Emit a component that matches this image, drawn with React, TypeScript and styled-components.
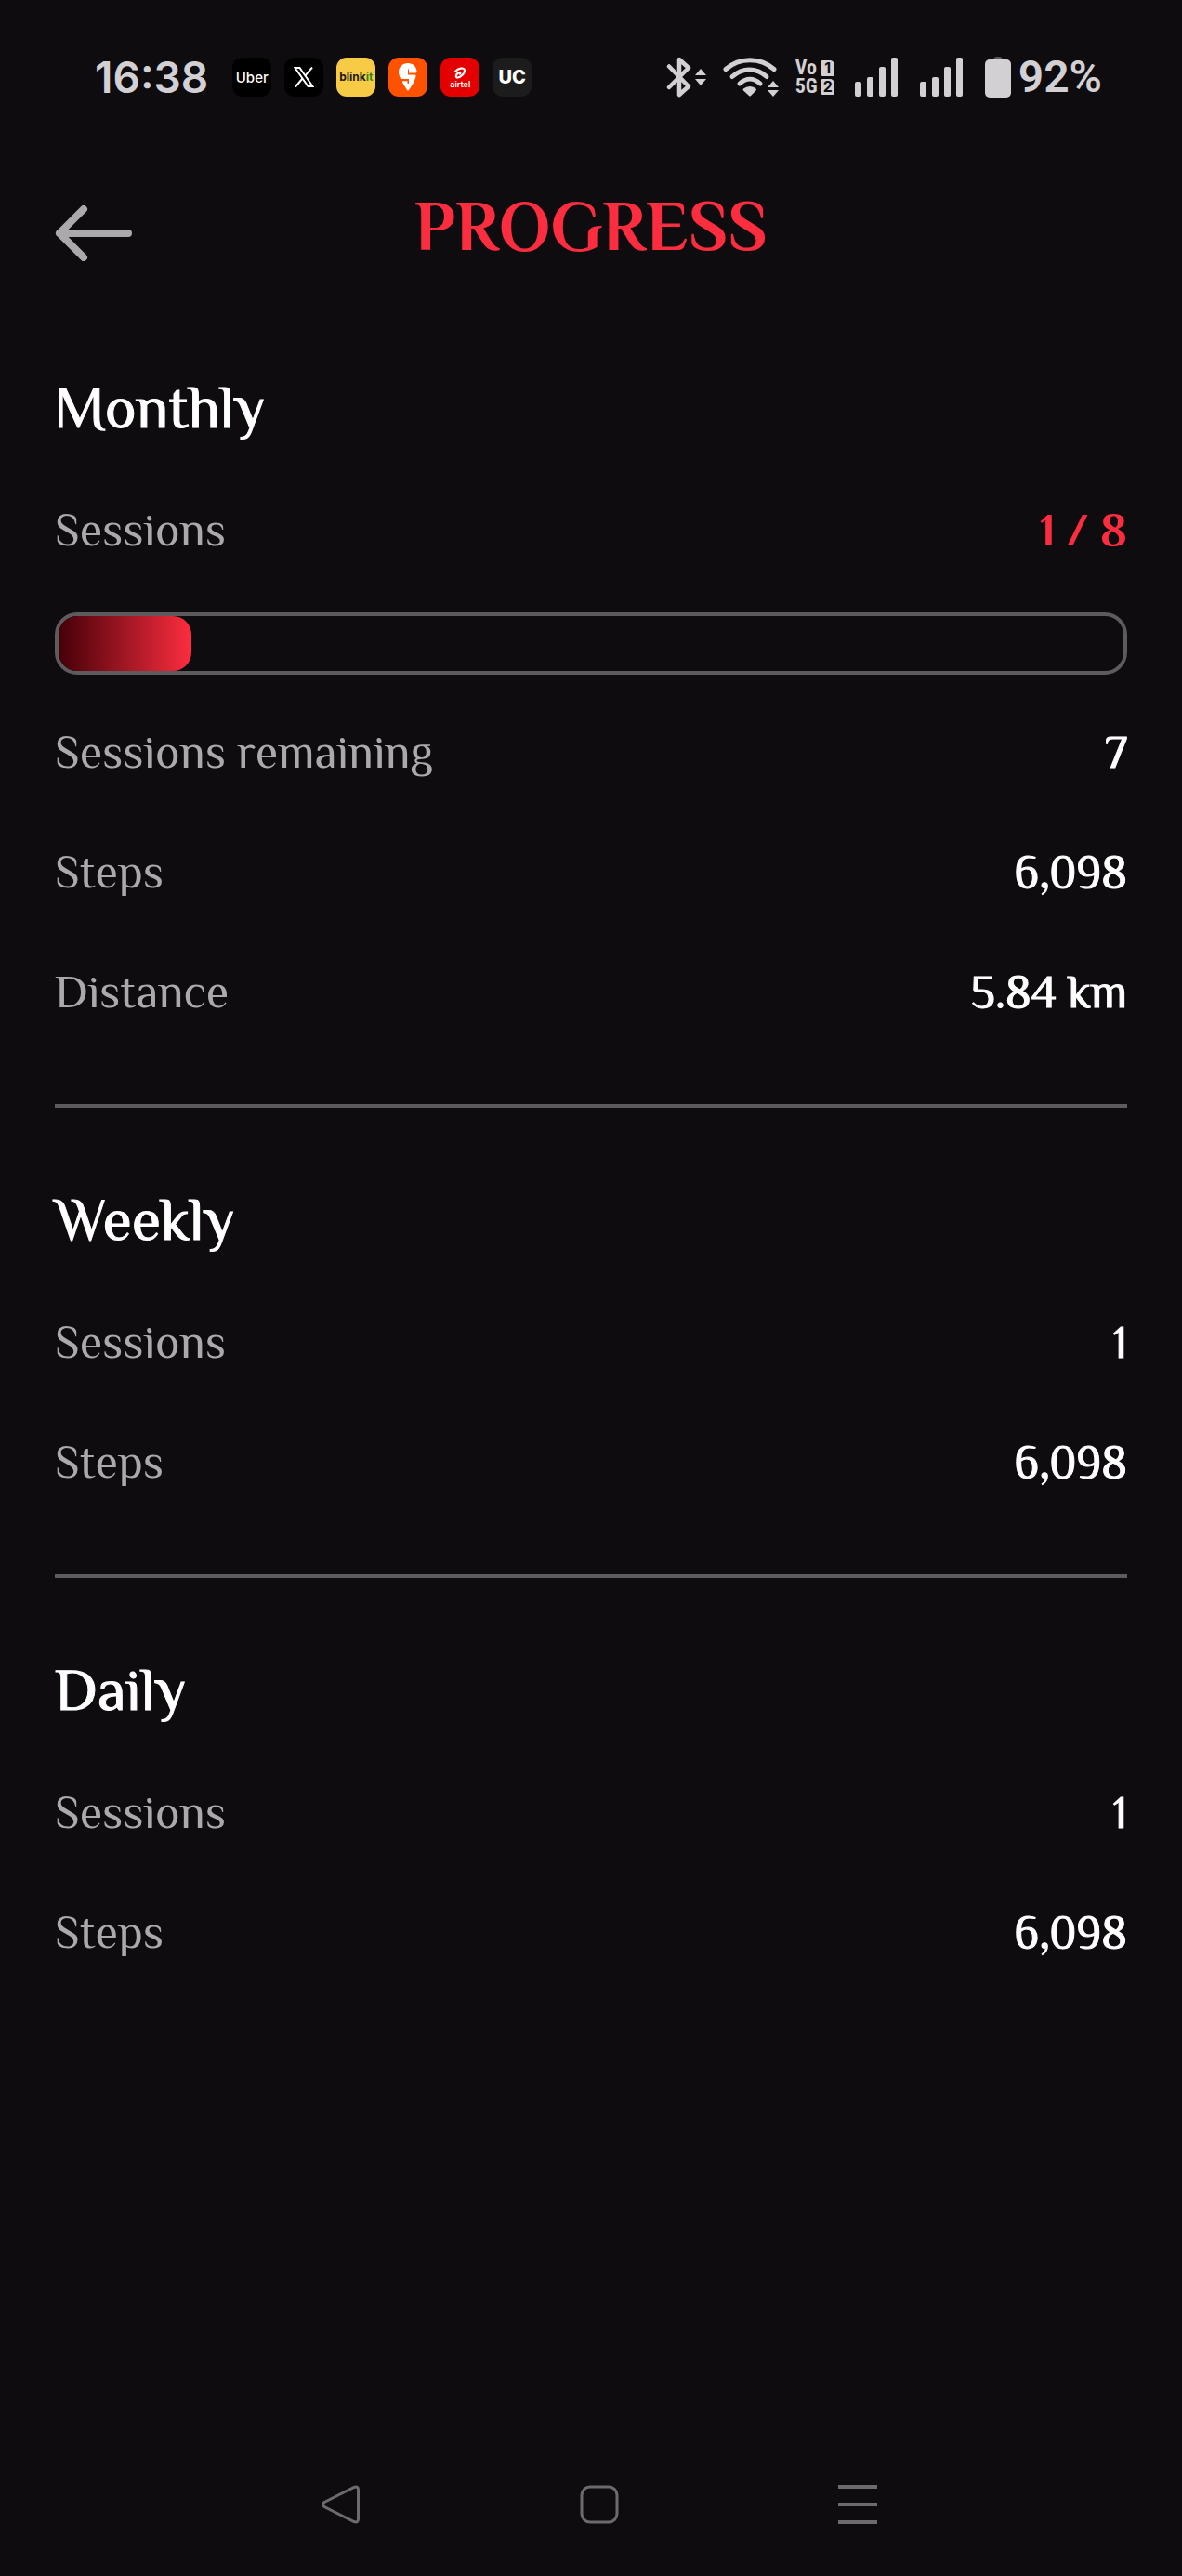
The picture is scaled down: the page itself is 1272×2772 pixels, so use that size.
import React from "react";
import styled, { createGlobalStyle } from "styled-components";

const color = {
  background: "#0f0c10",
  accent: "#fc2d3f",
  text: "#ffffff",
  label: "#aba9ab",
  line: "#5d5b5e",
  status: "#d2d0d3",
  nav: "#6c6a6d",
};

const GlobalStyle = createGlobalStyle`
  body {
    margin: 0;
    background: ${color.background};
  }
  *, *::before, *::after {
    box-sizing: border-box;
  }
`;

const Screen = styled.div`
  display: flex;
  flex-direction: column;
  min-height: 100vh;
  background: ${color.background};
  color: ${color.text};
  font-family: Philosopher, "Liberation Serif", serif;
`;

const StatusBar = styled.div`
  display: flex;
  align-items: center;
  justify-content: space-between;
  height: 166px;
  padding: 0 86px 0 102px;
  color: ${color.status};
  font-family: Inter, sans-serif;
`;

const StatusGroup = styled.div<{ $gap: number }>`
  display: flex;
  align-items: center;
  gap: ${(p) => p.$gap}px;
`;

const StatusText = styled.span<{ $narrow?: boolean }>`
  font-family: ${(p) => (p.$narrow ? "Roboto" : "Inter")}, sans-serif;
  font-size: ${(p) => (p.$narrow ? 48 : 46)}px;
  font-weight: 600;
  line-height: 56px;
`;

const AppTiles = styled.div`
  display: flex;
  gap: 14px;
`;

const AppTile = styled.div<{ $fill: string; $size?: number; $weight?: number; $ink?: string }>`
  display: flex;
  flex-direction: column;
  align-items: center;
  justify-content: center;
  width: 42px;
  height: 42px;
  border-radius: 11px;
  background: ${(p) => p.$fill};
  color: ${(p) => p.$ink ?? "#ffffff"};
  font-size: ${(p) => p.$size ?? 12}px;
  font-weight: ${(p) => p.$weight ?? 500};
  line-height: 1;
`;

const TileWord = styled.span`
  display: flex;
`;

const GreenPart = styled.span`
  color: #2c8a1c;
`;

const Svg = styled.svg`
  display: block;
  flex: none;
`;

const NetworkBadge = styled.div`
  display: grid;
  grid-template-columns: 24px 14px;
  column-gap: 4px;
  row-gap: 2px;
  align-items: center;
  font-family: "Roboto Condensed", "Liberation Sans Narrow", "Liberation Sans", sans-serif;
  font-size: 22px;
  font-weight: 700;
  line-height: 18px;
`;

const SimCard = styled.span`
  display: block;
  height: 17px;
  border-radius: 1px 5px 1px 1px;
  background: ${color.status};
  color: ${color.background};
  font-family: Inter, sans-serif;
  font-size: 16px;
  line-height: 17px;
  text-align: center;
`;

const Header = styled.header`
  display: grid;
  grid-template-columns: 84px 1fr 84px;
  padding: 36px 59px 0;
`;

const BackButton = styled.button`
  padding: 19px 0 5px;
  border: 0;
  background: none;
  color: ${color.label};
  cursor: pointer;
`;

const Title = styled.h1`
  margin: 0;
  color: ${color.accent};
  font-size: 76px;
  font-weight: 700;
  line-height: 84px;
  text-align: center;
`;

const Content = styled.main`
  padding: 116px 59px 64px;
`;

const Section = styled.section`
  & + & {
    margin-top: 88px;
    padding-top: 84px;
    border-top: 4px solid ${color.line};
  }
`;

const Heading = styled.h2`
  margin: 0 0 64px;
  font-size: 64px;
  font-weight: 400;
  line-height: 72px;
  -webkit-text-stroke: 1px currentColor;
`;

const Row = styled.div`
  display: flex;
  justify-content: space-between;
  font-size: 50px;
  line-height: 65px;

  & + & {
    margin-top: 64px;
  }
`;

const Label = styled.span`
  color: ${color.label};
`;

const Value = styled.span<{ $accent?: boolean }>`
  color: ${(p) => (p.$accent ? color.accent : color.text)};
  font-weight: ${(p) => (p.$accent ? 700 : 400)};
  -webkit-text-stroke: ${(p) => (p.$accent ? 0 : 1)}px currentColor;
`;

const Track = styled.div`
  height: 67px;
  margin: 56px 0 51px;
  border: 4px solid ${color.line};
  border-radius: 24px;
  overflow: hidden;
`;

const Fill = styled.div`
  height: 100%;
  border-radius: 20px;
  background: linear-gradient(90deg, #450008, ${color.accent});
`;

const NavBar = styled.nav`
  display: flex;
  align-items: center;
  justify-content: center;
  gap: 236px;
  height: 154px;
  margin-top: auto;
  padding-left: 17px;
`;

const NavButton = styled.button`
  padding: 0;
  border: 0;
  background: none;
  color: ${color.nav};
  cursor: pointer;
`;

function Signal() {
  return (
    <Svg width="46" height="42" viewBox="0 0 46 42" fill="currentColor">
      <rect x="0" y="26" width="7" height="16" rx="2" />
      <rect x="13" y="21" width="7" height="21" rx="2" />
      <rect x="26" y="10" width="7" height="32" rx="2" />
      <rect x="39" y="0" width="7" height="42" rx="2" />
    </Svg>
  );
}

function Bluetooth() {
  return (
    <Svg width="43" height="44" viewBox="0 0 43 44" fill="none">
      <path
        d="M3 10.500L24 32L14 41V3L24 12L3 33"
        stroke="currentColor"
        strokeWidth="4.500"
        strokeLinecap="round"
        strokeLinejoin="round"
      />
      <path d="M37 13l6 7H31zM37 31l6-7H31z" fill="currentColor" />
    </Svg>
  );
}

function Wifi() {
  return (
    <Svg width="60" height="42" viewBox="0 0 60 42" fill="none">
      <g stroke="currentColor" strokeWidth="5" strokeLinecap="round">
        <path d="M3 12.500C18-.5 40-.5 55 12.500" />
        <path d="M10 20.500C21 10.500 36 10.500 47 20.500" />
        <path d="M18 28C25 21.500 33 21.500 40 28" />
      </g>
      <path d="M29 31q4 0 6.500 2.500q1 1 0 2L30 41q-1 1-2 0l-6-5.500q-1-1 0-2Q25 31 29 31z" fill="currentColor" />
      <path d="M54 25l6 7H48zM54 42l6-7H48z" fill="currentColor" />
    </Svg>
  );
}

function Battery() {
  return (
    <Svg width="28" height="44" viewBox="0 0 28 44">
      <path d="M9 4q0-4 4-4h2q4 0 4 4z" fill="#5a585b" />
      <rect x="0" y="3" width="28" height="41" rx="5" fill="currentColor" />
    </Svg>
  );
}

function Stat({ label, value, accent }: { label: string; value: string; accent?: boolean }) {
  return (
    <Row>
      <Label>{label}</Label>
      <Value $accent={accent}>{value}</Value>
    </Row>
  );
}

function Progress({ done, total }: { done: number; total: number }) {
  return (
    <Track role="progressbar" aria-label="Sessions" aria-valuenow={done} aria-valuemin={0} aria-valuemax={total}>
      <Fill style={{ width: `${(done / total) * 100}%` }} />
    </Track>
  );
}

export default function App() {
  return (
    <Screen>
      <GlobalStyle />
      <StatusBar>
        <StatusGroup $gap={26}>
          <StatusText>16:38</StatusText>
          <AppTiles>
            <AppTile $fill="#000000" $size={15}>Uber</AppTile>
            <AppTile $fill="#000000">
              <Svg width="22" height="22" viewBox="0 0 22 22" fill="none" stroke="#ffffff">
                <path d="M1.500 1H6.500L20.500 21H15.500Z" strokeWidth="2" />
                <path d="M20 .5L12.500 9.300M9.500 12.500L2 21.500" strokeWidth="2" />
              </Svg>
            </AppTile>
            <AppTile $fill="#f8cb46" $size={12} $weight={700} $ink="#1c1c1c">
              <TileWord>blink<GreenPart>it</GreenPart></TileWord>
            </AppTile>
            <AppTile $fill="#fe5200">
              <Svg width="20" height="30" viewBox="0 0 20 30">
                <path
                  d="M10 0C15 0 19 3.500 19.500 8.500Q19.700 10.500 18.500 10.500H11V6.500H10V12.500H17.500Q19 12.500 18.500 14.500C17 20 14 25 10 30C7.500 26.500 5.500 23.500 4 20.500Q3.500 19.300 5 19.300H9.500V22H11V17H3.500Q2 17 1.500 15.500C.5 13 0 11.500 0 9.500C0 4 4.500 0 10 0Z"
                  fill="#ffffff"
                />
              </Svg>
            </AppTile>
            <AppTile $fill="#e40000" $size={9} $weight={600}>
              <Svg width="14" height="14" viewBox="0 0 14 14" fill="none" stroke="#ffffff" strokeLinecap="round">
                <path d="M2 5C5 1.500 11 0 12 3.500C12.500 7 7.500 11.500 4.500 11.500C2 11.500 2.500 8.500 4.500 7C6 5.800 8 6 7 7.500" strokeWidth="2.200" />
              </Svg>
              airtel
            </AppTile>
            <AppTile $fill="#1c1c1c" $size={20} $weight={800}>UC</AppTile>
          </AppTiles>
        </StatusGroup>
        <StatusGroup $gap={22}>
          <StatusGroup $gap={18}>
            <Bluetooth />
            <Wifi />
            <NetworkBadge>
              <span>Vo</span>
              <SimCard>1</SimCard>
              <span>5G</span>
              <SimCard>2</SimCard>
            </NetworkBadge>
          </StatusGroup>
          <StatusGroup $gap={24}>
            <Signal />
            <Signal />
            <StatusGroup $gap={8}>
              <Battery />
              <StatusText $narrow>92%</StatusText>
            </StatusGroup>
          </StatusGroup>
        </StatusGroup>
      </StatusBar>

      <Header>
        <BackButton aria-label="Back">
          <Svg width="84" height="60" viewBox="0 0 84 60" fill="none" stroke="currentColor" strokeWidth="8" strokeLinecap="round" strokeLinejoin="round">
            <path d="M31 4L5 30L31 56M5 30H79" />
          </Svg>
        </BackButton>
        <Title>PROGRESS</Title>
      </Header>

      <Content>
        <Section>
          <Heading>Monthly</Heading>
          <Stat label="Sessions" value="1 / 8" accent />
          <Progress done={1} total={8} />
          <Stat label="Sessions remaining" value="7" />
          <Stat label="Steps" value="6,098" />
          <Stat label="Distance" value="5.84 km" />
        </Section>
        <Section>
          <Heading>Weekly</Heading>
          <Stat label="Sessions" value="1" />
          <Stat label="Steps" value="6,098" />
        </Section>
        <Section>
          <Heading>Daily</Heading>
          <Stat label="Sessions" value="1" />
          <Stat label="Steps" value="6,098" />
        </Section>
      </Content>

      <NavBar>
        <NavButton aria-label="Back">
          <Svg width="42" height="42" viewBox="0 0 42 42" fill="none" stroke="currentColor" strokeWidth="3">
            <path d="M3 18.500L35 2.500Q39.500 1 39.500 5V37Q39.500 41 35 39.500L3 23.500Q0 21 3 18.500Z" />
          </Svg>
        </NavButton>
        <NavButton aria-label="Home">
          <Svg width="42" height="42" viewBox="0 0 42 42" fill="none" stroke="currentColor" strokeWidth="3">
            <rect x="2" y="2" width="38" height="38" rx="9" />
          </Svg>
        </NavButton>
        <NavButton aria-label="Recent apps">
          <Svg width="42" height="42" viewBox="0 0 42 42" fill="currentColor">
            <path d="M0 0H42V4H0ZM0 19H42V23H0ZM0 38H42V42H0Z" />
          </Svg>
        </NavButton>
      </NavBar>
    </Screen>
  );
}
